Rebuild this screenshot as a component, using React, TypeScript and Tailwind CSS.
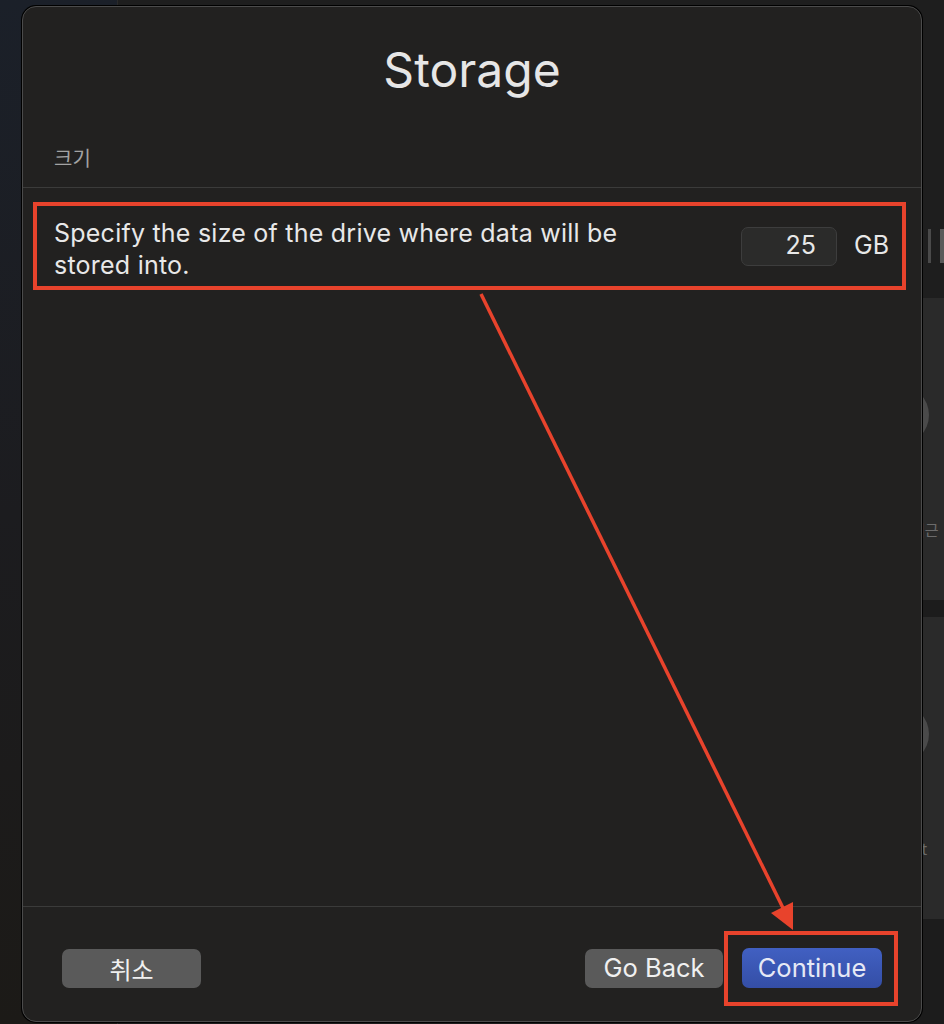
import React from 'react';

const latin = "font-['Inter','Liberation_Sans','Noto_Sans_CJK_KR',sans-serif]";
const hangul = "font-['Noto_Sans_CJK_KR','Inter',sans-serif]";

// background app cards, mostly hidden behind the sheet
const BackCard: React.FC<{ label: string; labelOffset: string }> = ({ label, labelOffset }) => (
  <div className="w-[122px] shrink-0 h-[302px] bg-[#2a2a2a] pt-[87px]">
    <div className="ml-[31px] w-[60px] h-[60px] rounded-full bg-[#4a4a4a]" />
    <div className={`${hangul} mt-[73px] text-[15px] leading-[24px] text-[#6b6b6b] whitespace-nowrap ${labelOffset}`}>
      {label}
    </div>
  </div>
);

const Arrow: React.FC = () => (
  <svg className="absolute inset-0 pointer-events-none" width="944" height="1024" viewBox="0 0 944 1024">
    <line x1="481" y1="294" x2="783" y2="908" stroke="#e8432c" strokeWidth="3.5" />
    <polygon points="793,930 771,913 793,902" fill="#e8432c" />
  </svg>
);

export default function App() {
  return (
    <div className="relative w-[944px] h-[1024px] overflow-hidden flex bg-[#1c1c1c]">
      {/* sidebar of the window behind */}
      <div className="w-[118px] shrink-0 h-full bg-gradient-to-b from-[#1b2029] via-[#1c1c1f] to-[#1c1a17] border-r border-[#2a2a2a]" />

      {/* main area of the window behind */}
      <div className="flex-1 flex flex-col overflow-hidden">
        <div className="h-[298px] shrink-0 bg-[#1e1e1e] flex items-start pt-[229px] pl-[810px] gap-[9px]">
          <div className="w-[3px] h-[34px] bg-[#4a4a4a]" />
          <div className="w-[4px] h-[34px] bg-[#5a5a5a]" />
        </div>
        <div className="flex flex-col gap-[17px] pl-[720px]">
          <BackCard label="최근" labelOffset="ml-[73px]" />
          <BackCard label="Mount" labelOffset={`ml-[44px] ${latin}`} />
        </div>
      </div>

      {/* sheet */}
      <div className={`${latin} absolute left-[22px] top-[6px] w-[900px] h-[1016px] rounded-[14px] border border-[#4b4b4b] bg-[#222120] shadow-[0_0_0_1px_#000] flex flex-col`}>
        <h1 className="pt-[34px] text-center text-[48px] leading-[58px] text-[#e6e6e6] font-normal">Storage</h1>

        <div className={`${hangul} mt-[48px] pl-[31px] text-[20px] leading-[22px] text-[#a3a3a3]`}>크기</div>
        <div className="mt-[18px] h-px bg-[#3b3b3a]" />

        <div className="mt-[14px] ml-[10px] mr-[15px] h-[88px] border-4 border-[#e8432c] flex items-center pl-[17px] pr-[13px]">
          <p className="mt-[5px] max-w-[620px] text-[25px] leading-[32px] tracking-[0.23px] text-[#e8e8e8]">
            Specify the size of the drive where data will be stored into.
          </p>
          <div className="ml-auto w-[96px] h-[39px] rounded-[7px] bg-[#2b2b2a] border border-[#3d3d3d] flex items-center justify-end pr-[20px] text-[25px] text-[#e8e8e8]">
            25
          </div>
          <span className="ml-[17px] text-[25px] text-[#e8e8e8]">GB</span>
        </div>

        <div className="flex-1" />
        <div className="h-px bg-[#3b3b3a]" />

        <div className="pt-[24px] pb-[15px] pl-[39px] pr-[23px] flex items-center">
          <button className={`${hangul} w-[139px] h-[39px] rounded-[7px] bg-[#5a5a5a] text-[24px] text-[#f0f0f0]`}>
            취소
          </button>
          <div className="ml-auto flex items-center gap-[1px]">
            <button className="w-[138px] h-[39px] rounded-[7px] bg-[#5a5a5a] text-[25.5px] text-[#f0f0f0]">Go Back</button>
            <div className="border-4 border-[#e8432c] pl-[14px] pr-[12px] pt-[13px] pb-[14px]">
              <button className="w-[140px] h-[40px] rounded-[7px] bg-gradient-to-b from-[#4160c2] to-[#344ea6] text-[25.5px] text-[#e6e9f5]">
                Continue
              </button>
            </div>
          </div>
        </div>
      </div>

      <Arrow />
    </div>
  );
}
